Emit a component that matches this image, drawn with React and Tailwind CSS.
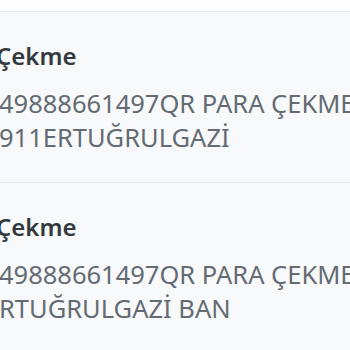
const items = [
  { title: 'Çekme', lines: ['49888661497QR PARA ÇEKME', '911ERTUĞRULGAZİ'] },
  { title: 'Çekme', lines: ['49888661497QR PARA ÇEKME', 'RTUĞRULGAZİ BAN'] },
]

export default function App() {
  return (
    <div
      className="h-[350px] w-[350px] overflow-hidden bg-[#f8f9fb]"
      style={{ fontFamily: '"Noto Sans", "Open Sans", sans-serif' }}
    >
      <div className="h-[11px] bg-[#fdfdfd]" />
      {items.map((item, i) => (
        <div key={i} className="border-t border-[#e6e8eb] pt-[28px] pb-[28px]">
          <p className="-ml-[4px] whitespace-nowrap text-[24px] leading-[32px] font-semibold text-[#343a40]">
            {item.title}
          </p>
          <div className="mt-[14px] -ml-[1px] text-[25.5px] leading-[34px] text-[#646b73]">
            {item.lines.map((line, j) => (
              <p key={j} className="whitespace-nowrap">{line}</p>
            ))}
          </div>
        </div>
      ))}
    </div>
  )
}
